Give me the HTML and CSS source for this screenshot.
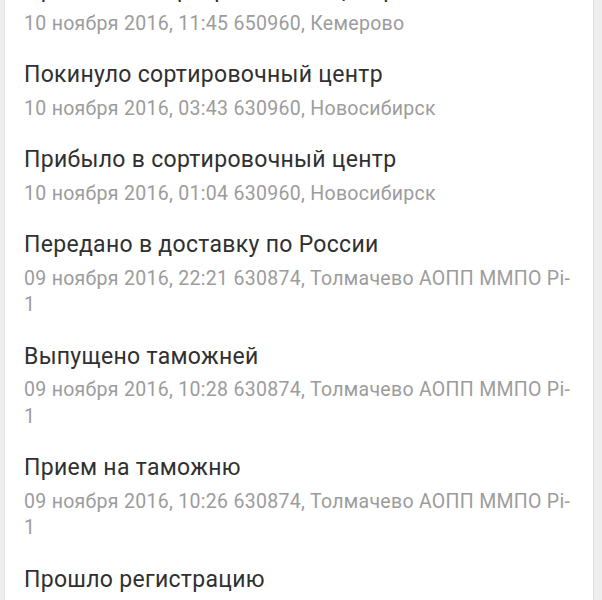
FILE: index.html
```html
<!DOCTYPE html>
<html lang="ru">
<head>
  <meta charset="UTF-8">
  <title>Отслеживание</title>
  <link rel="stylesheet" href="styles.css">
</head>
<body>

  <!-- Tracking history card -->
  <div class="card">
    <ul class="history">
      <li class="event">
        <div class="event-title">Прибыло в сортировочный центр</div>
        <div class="event-info">10 ноября 2016, 11:45 650960, Кемерово</div>
      </li>
      <li class="event">
        <div class="event-title">Покинуло сортировочный центр</div>
        <div class="event-info">10 ноября 2016, 03:43 630960, Новосибирск</div>
      </li>
      <li class="event">
        <div class="event-title">Прибыло в сортировочный центр</div>
        <div class="event-info">10 ноября 2016, 01:04 630960, Новосибирск</div>
      </li>
      <li class="event">
        <div class="event-title">Передано в доставку по России</div>
        <div class="event-info">09 ноября 2016, 22:21 630874, Толмачево АОПП ММПО Pi-1</div>
      </li>
      <li class="event">
        <div class="event-title">Выпущено таможней</div>
        <div class="event-info">09 ноября 2016, 10:28 630874, Толмачево АОПП ММПО Pi-1</div>
      </li>
      <li class="event">
        <div class="event-title">Прием на таможню</div>
        <div class="event-info">09 ноября 2016, 10:26 630874, Толмачево АОПП ММПО Pi-1</div>
      </li>
      <li class="event">
        <div class="event-title">Прошло регистрацию</div>
        <div class="event-info">09 ноября 2016, 09:50 630874, Толмачево АОПП ММПО Pi-1</div>
      </li>
    </ul>
  </div>

</body>
</html>
```

FILE: styles.css
```css
/* Page background and font */
html, body {
  margin: 0;
  padding: 0;
  height: 100%;
  overflow: hidden;
  font-family: Roboto, "Noto Sans", sans-serif;
  background: #eeeeee;
}

/* White card with thin side borders */
.card {
  display: flow-root; /* keep the list's negative margin inside */
  margin: 0 8px 0 4px;
  min-height: 100%;
  background: #fff;
  border-left: 1px solid #e2e2e2;
  border-right: 1px solid #dcdcdc;
  padding: 0 17px 0 19px;
}

/******************************************************
 * HISTORY LIST
 ******************************************************/
.history {
  list-style: none;
  margin: -36px 0 0 0; /* first item is scrolled off the top */
  padding: 0;
}
.event {
  padding: 12px 0;
}
.event-title {
  font-size: 23px;
  line-height: 28px;
  letter-spacing: 0.3px;
  color: #303030;
}
.event-info {
  margin-top: 6.5px;
  font-size: 19.5px;
  line-height: 26.5px;
  letter-spacing: 0.3px;
  color: #9c9c9c;
}
```
